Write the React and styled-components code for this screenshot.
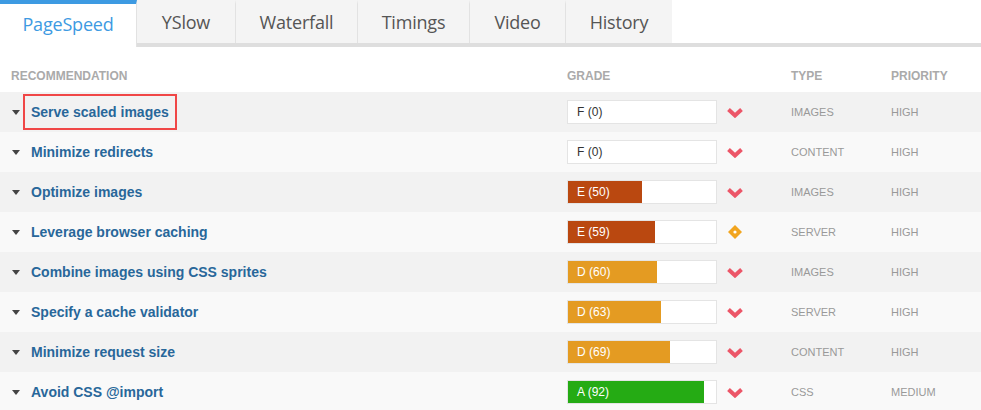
import React from "react";
import styled, { createGlobalStyle } from "styled-components";

const GlobalStyle = createGlobalStyle`
  body {
    margin: 0;
    background: #fff;
    font-family: "Liberation Sans", Arial, sans-serif;
  }
`

const Tabs = styled.nav`
  display: flex;
  height: 47px;
  box-sizing: border-box;
  border-bottom: 4px solid #dedede;
`

const Tab = styled.div`
  display: flex;
  align-items: center;
  justify-content: center;
  box-sizing: border-box;
  width: ${(p) => p.w}px;
  font-family: "Open Sans", sans-serif;
  font-size: 18px;
  letter-spacing: -0.2px;
  color: ${(p) => (p.active ? "#3d9ae2" : "#555")};
  background: ${(p) => (p.active ? "#fff" : "#f4f4f4")};
  border-top: 4px solid ${(p) => (p.active ? "#3d9ae2" : "#f4f4f4")};
  border-right: 1px solid #e2e2e2;
  padding-bottom: 4px;
  margin-bottom: ${(p) => (p.active ? "-4px" : "0")};
  &:last-child {
    border-right: none;
  }
`

const Table = styled.div`
  margin-top: 13px;
`

const Row = styled.div`
  display: grid;
  grid-template-columns: 566px 225px 100px 1fr;
  align-items: center;
  height: ${(p) => (p.head ? 32 : 40)}px;
  background: ${(p) => (p.head ? "#fff" : p.odd ? "#f2f2f2" : "#f9f9f9")};
`

const HeadCell = styled.div`
  font-size: 12px;
  font-weight: bold;
  color: #aaa;
  padding-left: ${(p) => p.pad || 0}px;
`

const Title = styled.div`
  display: flex;
  align-items: center;
  padding-left: 12px;
`

const Caret = styled.span`
  width: 0;
  height: 0;
  border-left: 4px solid transparent;
  border-right: 4px solid transparent;
  border-top: 5px solid #444;
  margin-right: 11px;
`

const Link = styled.span`
  font-size: 14px;
  line-height: 16px;
  font-weight: bold;
  color: #28679a;
  padding: 8px 6px;
  margin-left: -8px;
  border: 2px solid ${(p) => (p.marked ? "#f04747" : "transparent")};
`

const GradeCell = styled.div`
  display: flex;
  align-items: center;
  gap: 10px;
`

const Bar = styled.div`
  position: relative;
  width: 150px;
  height: 24px;
  box-sizing: border-box;
  border: 1px solid #e4e4e4;
  background: #fff;
  margin-left: 1px;
`

const Fill = styled.div`
  height: 100%;
  background: ${(p) => p.color};
`

const BarLabel = styled.span`
  position: absolute;
  left: 9px;
  top: 4px;
  font-size: 12px;
  color: ${(p) => (p.light ? "#fff" : "#333")};
`

const Meta = styled.div`
  font-size: 11px;
  color: #999;
`

const Chevron = () => (
  <svg width="16" height="12" viewBox="0 0 16 12">
    <path d="M1.5 3.5 L8 9.5 L14.5 3.5" fill="none" stroke="#ec5668" strokeWidth="4" strokeLinejoin="miter" />
  </svg>
)

const Diamond = () => (
  <svg width="16" height="16" viewBox="0 0 16 16">
    <path d="M8 1 L15 8 L8 15 L1 8 Z" fill="#f2a51f" />
    <circle cx="8" cy="8" r="1.6" fill="#fff" />
  </svg>
)

const colors = { F: "#fff", E: "#ba4810", D: "#e49b22", A: "#25ab14" }

const rules = [
  { name: "Serve scaled images", grade: "F", score: 0, type: "IMAGES", priority: "HIGH", marked: true },
  { name: "Minimize redirects", grade: "F", score: 0, type: "CONTENT", priority: "HIGH" },
  { name: "Optimize images", grade: "E", score: 50, type: "IMAGES", priority: "HIGH" },
  { name: "Leverage browser caching", grade: "E", score: 59, type: "SERVER", priority: "HIGH", warn: true },
  { name: "Combine images using CSS sprites", grade: "D", score: 60, type: "IMAGES", priority: "HIGH" },
  { name: "Specify a cache validator", grade: "D", score: 63, type: "SERVER", priority: "HIGH" },
  { name: "Minimize request size", grade: "D", score: 69, type: "CONTENT", priority: "HIGH" },
  { name: "Avoid CSS @import", grade: "A", score: 92, type: "CSS", priority: "MEDIUM" },
]

const tabs = [
  ["PageSpeed", 137],
  ["YSlow", 99],
  ["Waterfall", 122],
  ["Timings", 112],
  ["Video", 96],
  ["History", 106],
]

export default function App() {
  return (
    <>
      <GlobalStyle />
      <Tabs>
        {tabs.map(([label, w], i) => (
          <Tab key={label} w={w} active={i === 0}>{label}</Tab>
        ))}
      </Tabs>
      <Table>
        <Row head>
          <HeadCell pad={11}>RECOMMENDATION</HeadCell>
          <HeadCell pad={1}>GRADE</HeadCell>
          <HeadCell>TYPE</HeadCell>
          <HeadCell>PRIORITY</HeadCell>
        </Row>
        {rules.map((r, i) => (
          <Row key={r.name} odd={i % 2 === 0}>
            <Title>
              <Caret />
              <Link marked={r.marked}>{r.name}</Link>
            </Title>
            <GradeCell>
              <Bar>
                <Fill color={colors[r.grade]} style={{ width: `${r.score}%` }} />
                <BarLabel light={r.score > 0}>{r.grade} ({r.score})</BarLabel>
              </Bar>
              {r.warn ? <Diamond /> : <Chevron />}
            </GradeCell>
            <Meta>{r.type}</Meta>
            <Meta>{r.priority}</Meta>
          </Row>
        ))}
      </Table>
    </>
  )
}
